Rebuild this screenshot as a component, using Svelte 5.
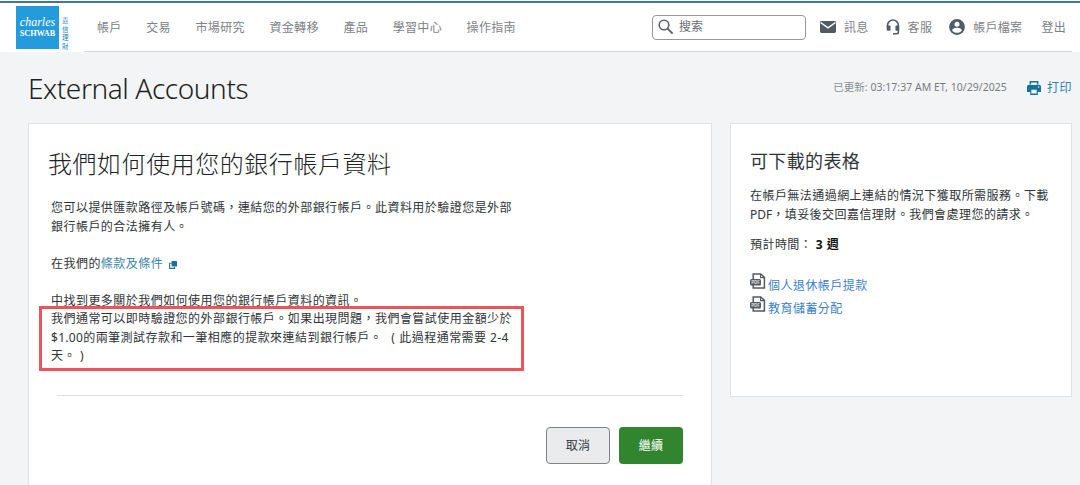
<script>
  let query = $state('');
  const nav = ['帳戶', '交易', '市場研究', '資金轉移', '產品', '學習中心', '操作指南'];
  const forms = ['個人退休帳戶提款', '教育儲蓄分配'];
</script>

<div class="page">
  <header>
    <a class="brand" href="#home" aria-label="Charles Schwab">
      <span class="logo"><i>charles</i><span>SCHWAB</span></span>
      <span class="cn"><span>嘉</span><span>信</span><span>理</span><span>財</span></span>
    </a>
    <div class="bar">
      <nav>
        {#each nav as item (item)}<a href="#nav">{item}</a>{/each}
      </nav>
      <label class="search">
        <svg width="16" height="16" viewBox="0 0 16 16"><circle cx="6" cy="6" r="4.8" fill="none" stroke="#5c646b" stroke-width="1.6" /><path d="M9.400 9.400l5.200 5.200" stroke="#5c646b" stroke-width="2" /></svg>
        <input bind:value={query} placeholder="搜索" aria-label="搜索" />
      </label>
      <div class="tools">
        <a class="mail" href="#messages">
          <svg width="16" height="12" viewBox="0 0 16 12"><path d="M1.300 0h13.400Q16 0 16 1.300v9.300q0 1.400-1.400 1.400H1.400Q0 12 0 10.600V1.300Q0 0 1.300 0z" fill="#515b66" /><path d="M.6 1.500L8 6.900l7.400-5.400" fill="none" stroke="#fff" stroke-width="1.500" /></svg>
          <span>訊息</span>
        </a>
        <a class="help" href="#help">
          <svg width="14" height="16" viewBox="0 0 14 16"><path d="M1.500 8V6.500a5.400 5.400 0 0 1 10.900 0V13q0 1.700-1.700 1.700H7" fill="none" stroke="#515b66" stroke-width="1.600" /><rect x=".7" y="6.600" width="3.800" height="5.200" rx="1" fill="#515b66" /><rect x="9.400" y="6.600" width="3.800" height="5.200" rx="1" fill="#515b66" /></svg>
          <span>客服</span>
        </a>
        <a class="profile" href="#profile">
          <svg width="16" height="16" viewBox="0 0 16 16"><circle cx="8" cy="8" r="7.900" fill="#515b66" /><circle cx="8" cy="5.200" r="2.500" fill="#fff" /><path d="M3.200 11.500c0-2 2.900-2.800 4.800-2.800s4.800.8 4.800 2.800c-1 1.400-2.700 2.300-4.800 2.300s-3.800-.9-4.800-2.300z" fill="#fff" /></svg>
          <span>帳戶檔案</span>
        </a>
        <a class="logout" href="#logout"><span>登出</span></a>
      </div>
    </div>
  </header>

  <div class="titlebar">
    <h1>External Accounts</h1>
    <span class="updated">已更新: <b>03:17:37 AM ET, 10/29/2025</b></span>
    <a class="print" href="#print">
      <svg width="14" height="14" viewBox="0 0 14 14"><path d="M2.600 0h8.800v3.300H2.600z" fill="#16739c" /><path d="M2 3.800h10q2 0 2 2v5.100H0V5.800q0-2 2-2z" fill="#16739c" /><path d="M3.200 8.400h7.600V14H3.200z" fill="#16739c" /><path d="M4.100 1.500h5.800v2.300H4.100zM4.300 8.800h5.400v3.600H4.300z" fill="#f3f4f6" /><circle cx="11.600" cy="6" r=".7" fill="#f3f4f6" /></svg>
      <span>打印</span>
    </a>
  </div>

  <main>
    <section class="card">
      <h2>我們如何使用您的銀行帳戶資料</h2>
      <div class="copy">
        <p>您可以提供匯款路徑及帳戶號碼，連結您的外部銀行帳戶。此資料用於驗證您是外部<br />銀行帳戶的合法擁有人。</p>
        <p>在我們的<a href="#terms">條款及條件</a><svg class="ext" width="8" height="8" viewBox="0 0 8 8"><path d="M2.500 2.300H.6v5.100h5V6" fill="none" stroke="#2a7398" stroke-width="1.100" /><rect x="2.600" y="0" width="5.400" height="5.600" rx=".6" fill="#16709a" /></svg></p>
        <div>中找到更多關於我們如何使用您的銀行帳戶資料的資訊。</div>
        <div class="marked">我們通常可以即時驗證您的外部銀行帳戶。如果出現問題，我們會嘗試使用金額少於<br /><span class="lat">$1.00</span>的兩筆測試存款和一筆相應的提款來連結到銀行帳戶。<span class="paren">(</span>此過程通常需要 <span class="lat">2-4</span><br />天。<span class="close">)</span></div>
      </div>
      <hr />
      <div class="actions">
        <button class="cancel">取消</button>
        <button class="go">繼續</button>
      </div>
    </section>

    <aside>
      <h3>可下載的表格</h3>
      <p>在帳戶無法通過網上連結的情況下獲取所需服務。下載<br /><span class="pdf">PDF</span>，填妥後交回嘉信理財。我們會處理您的請求。</p>
      <p class="time">預計時間： <b>3 週</b></p>
      <ul>
        {#each forms as form (form)}
          <li>
            <svg width="16" height="16" viewBox="0 0 16 16"><path d="M3.200 6V.9h7.600l3.600 3.500v10.500H3.200V12" fill="none" stroke="#555b61" stroke-width="1.500" /><path d="M10.500 1v3.600h4" fill="none" stroke="#555b61" stroke-width="1.100" /><rect x="0" y="6" width="11" height="6.500" rx="1.500" fill="#555b61" /><text x="1.200" y="10.900" font-size="4.500" font-weight="600" letter-spacing="0" fill="#e8eaec">PDF</text></svg>
            <a href="#form">{form}</a>
          </li>
        {/each}
      </ul>
    </aside>
  </main>
</div>

<style>
  :global(body) { margin: 0; overflow: hidden; }
  .page {
    width: 1080px; height: 485px; overflow: hidden; box-sizing: border-box; background: #f3f4f6; color: #303437;
    font: 12px/18.5px "Noto Sans", "Noto Sans CJK TC", sans-serif; letter-spacing: 0.46px; white-space: nowrap;
  }
  a { color: inherit; text-decoration: none; }
  svg { flex: none; }
  header { height: 52px; box-sizing: border-box; background: linear-gradient(#f7f9fa 1px, #467792 1px, #467792 3px, #fff 3px); display: flex; padding: 0 8px 0 16px; }
  .brand { display: flex; width: 68px; padding-top: 6px; box-sizing: border-box; gap: 3px; }
  .logo { width: 43px; height: 43px; background: #249bdb; color: #fff; display: flex; flex-direction: column; align-items: center; font-family: "Liberation Serif", serif; letter-spacing: 0; }
  .logo i { font-size: 12px; line-height: 13px; margin-top: 10px; }
  .logo span { font-size: 8.2px; line-height: 8px; margin-top: 1px; font-weight: 700; }
  .cn { display: flex; flex-direction: column; padding-top: 10px; font: 6.5px/8.5px "Noto Sans CJK TC", sans-serif; color: #2389bd; letter-spacing: 0; }
  .bar { flex: 1; display: flex; align-items: center; border-bottom: 1px solid #d5d8da; padding-top: 3px; color: #7d8286; }
  nav { display: flex; gap: 24.6px; margin-left: 13px; padding-top: 2px; width: 555px; letter-spacing: 0.33px; }
  .search { display: flex; align-items: center; width: 154px; height: 25px; box-sizing: border-box; border: 1px solid #92979a; border-radius: 4px; padding-left: 5px; gap: 5px; background: #fff; }
  .search input { width: 110px; padding: 0; border: 0; outline: 0; background: none; font: inherit; color: #5c646b; }
  .search input::placeholder { color: #666c71; opacity: 1; }
  .tools { display: flex; align-items: center; letter-spacing: 0.3px; margin-left: 14px; }
  .tools a { display: flex; align-items: center; gap: 8px; }
  .tools span { padding-top: 2px; }
  .help { margin-left: 17px; }
  .profile { margin-left: 17px; }
  .logout { margin-left: 19px; }

  .titlebar { height: 71px; display: flex; align-items: center; padding: 0 8px 0 28px; box-sizing: border-box; }
  h1 { margin: 0; width: 806px; font: 300 28px/40px "Noto Sans", "Open Sans", sans-serif; letter-spacing: -0.42px; color: #1c1f21; }
  .updated { font-size: 10.5px; width: 194px; letter-spacing: 0.02px; color: #8a8f93; }
  .updated b { font-weight: 400; color: #777c80; }
  .print { display: flex; align-items: center; gap: 6px; color: #3484a9; }
  .print span { padding-top: 2px; }

  main { display: flex; align-items: flex-start; gap: 18px; padding: 0 8px 0 28px; }
  .card { width: 684px; height: 400px; box-sizing: border-box; background: #fff; border: 1px solid #e0e3e5; padding: 22px 28px 0 19px; }
  h2 { margin: 0; font-size: 24px; line-height: 36px; font-weight: 300; letter-spacing: 0.54px; color: #202325; }
  .copy { margin: 17px 0 0 3px; }
  .copy p { margin: 0 0 18.5px; }
  .copy a { color: #3a82ac; }
  .ext { margin-left: 6px; vertical-align: -1px; }
  .lat { letter-spacing: 0.3px; }
  .pdf { letter-spacing: 0; }
  .marked { position: relative; width: 470px; }
  .marked::after { content: ""; position: absolute; left: -12px; top: -4px; width: 479px; height: 59px; border: 3px solid #ee5359; }
  .paren { padding-left: 9px; padding-right: 4px; }
  .close { padding-left: 4px; }
  hr { margin: 29px 0 0 9px; border: 0; border-top: 1px solid #dcdfe1; }
  .actions { display: flex; justify-content: flex-end; gap: 9px; margin-top: 31px; }
  button { width: 64px; height: 37px; padding: 2px 0 0; border-radius: 4px; font: 400 12px/18px "Noto Sans", "Noto Sans CJK TC", sans-serif; letter-spacing: 0.3px; }
  .cancel { background: #e9ebed; border: 1px solid #7f8387; color: #33383c; }
  .go { background: #31852f; border: 0; color: #fff; }

  aside { width: 342px; height: 274px; box-sizing: border-box; background: #fff; border: 1px solid #e0e3e5; padding: 23px 19px 0; }
  h3 { margin: 0; font-size: 18px; line-height: 28px; font-weight: 400; letter-spacing: 0.35px; }
  aside p { margin: 12px 0 0; letter-spacing: 0.45px; }
  .time b { font-weight: 700; color: #111; }
  ul { list-style: none; margin: 18px 0 0; padding: 0; }
  li { display: flex; gap: 2px; height: 23px; }
  li a { padding-top: 4px; color: #3d7fc7; }
</style>
